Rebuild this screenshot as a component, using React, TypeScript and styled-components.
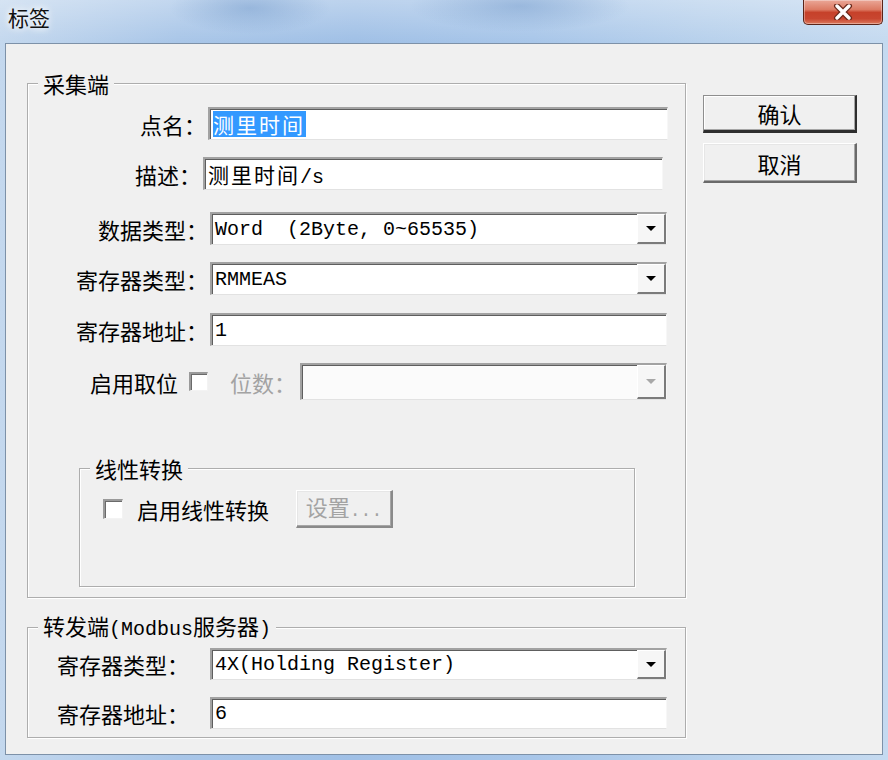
import React from "react";
import styled, { createGlobalStyle } from "styled-components";

const GlobalStyle = createGlobalStyle`
  html, body { margin: 0; padding: 0; background: #b9d1ea; }
  body { font-family: "Noto Sans CJK SC", sans-serif; }
  * { box-sizing: border-box; }
`;

const Window = styled.div`
  width: 888px;
  height: 760px;
  display: flex;
  flex-direction: column;
  overflow: hidden;
  background:
    radial-gradient(ellipse 80px 26px at 250px 8px, rgba(110, 150, 200, 0.45), transparent),
    radial-gradient(ellipse 110px 26px at 520px 6px, rgba(110, 150, 200, 0.45), transparent),
    linear-gradient(180deg, rgba(255, 255, 255, 0.3) 0px, rgba(255, 255, 255, 0) 42px),
    linear-gradient(90deg, #c4d8ee 0%, #a9c6e8 20%, #a0c0e6 40%, #a8c6e9 60%, #b8d1ec 80%, #c5daf0 100%);
`;

const TitleBar = styled.div`
  height: 43px;
  flex: none;
  display: flex;
  justify-content: space-between;
  align-items: flex-start;
  padding: 0 5px 0 8px;
`;

const Title = styled.div`
  font-size: 21px;
  line-height: 24px;
  margin-top: 5px;
  color: #111;
  text-shadow: 0 0 6px #fff, 0 0 10px rgba(255, 255, 255, 0.9);
`;

const CloseButton = styled.div`
  width: 80px;
  height: 25px;
  border: 1px solid #5a2418;
  border-top: none;
  border-radius: 0 0 5px 5px;
  background: linear-gradient(180deg, #eaa797 0%, #dc7a63 40%, #c6412a 52%, #c84630 78%, #dc7a5d 100%);
  box-shadow: inset 0 0 0 1px rgba(255, 255, 255, 0.35);
  display: flex;
  align-items: center;
  justify-content: center;
`;

const Client = styled.div`
  flex: 1;
  margin: 0 5px 5px 5px;
  border: 1px solid #7d91a8;
  background: #f0f0f0;
  display: flex;
  align-items: flex-start;
  padding: 27px 0 0 21px;
  gap: 17px;
`;

const LeftColumn = styled.div`
  width: 659px;
  display: flex;
  flex-direction: column;
`;

const RightColumn = styled.div`
  display: flex;
  flex-direction: column;
  gap: 10px;
  margin-top: 24px;
`;

const Group = styled.fieldset<{ $h: number; $w: number; $top?: number; $left?: number }>`
  margin: ${(p) => p.$top ?? 0}px 0 0 ${(p) => p.$left ?? 0}px;
  padding: 0;
  width: ${(p) => p.$w}px;
  height: ${(p) => p.$h}px;
  min-width: 0;
  border: 1px solid #adadad;
  box-shadow: inset 1px 1px 0 #fff, 1px 1px 0 #fff;
  display: flex;
  flex-direction: column;
`;

const Legend = styled.legend`
  margin-left: 10px;
  padding: 0 5px;
  font-size: 22px;
  line-height: 24px;
  color: #000;
  background: #f0f0f0;
  white-space: nowrap;
`;

const Mono = styled.span`
  font-family: "Liberation Mono", monospace;
  font-size: 20px;
`;

const Row = styled.div<{ $label: number; $field: number; $top: number; $h: number }>`
  display: grid;
  grid-template-columns: ${(p) => p.$label}px ${(p) => p.$field}px;
  column-gap: 2px;
  align-items: center;
  height: ${(p) => p.$h}px;
  margin-top: ${(p) => p.$top}px;
`;

const Label = styled.span<{ $align?: "left" | "right"; $indent?: number; $muted?: boolean }>`
  font-size: 22px;
  line-height: 24px;
  color: ${(p) => (p.$muted ? "#a3a3a3" : "#000")};
  white-space: nowrap;
  text-align: ${(p) => p.$align ?? "right"};
  padding-left: ${(p) => p.$indent ?? 0}px;
`;

const Field = styled.div<{ $disabled?: boolean; $w?: number; $ml?: number }>`
  align-self: stretch;
  ${(p) => (p.$w ? `width: ${p.$w}px; height: 100%;` : "")}
  margin-left: ${(p) => p.$ml ?? 0}px;
  display: flex;
  align-items: stretch;
  background: ${(p) => (p.$disabled ? "#fbfbfb" : "#fff")};
  border-style: solid;
  border-width: 2px 1px 1px 2px;
  border-color: #a2a2a2 #f7f7f7 #e2e2e2 #a2a2a2;
  box-shadow: inset 1px 1px 0 #5e5e5e;
  padding-left: 3px;
  font-family: "Liberation Mono", "Noto Sans CJK SC", monospace;
  font-size: 20px;
  color: #000;
  white-space: pre;
`;

const Value = styled.span`
  flex: 1;
  display: flex;
  align-items: center;
  min-width: 0;
`;

const Cjk = styled.span`
  font-family: "Noto Sans CJK SC", sans-serif;
  font-size: 21px;
  letter-spacing: 2px;
`;

const Selected = styled.span`
  background: #3399ff;
  color: #fff;
  font-family: "Noto Sans CJK SC", sans-serif;
  font-size: 21px;
  letter-spacing: 2px;
  line-height: 26px;
  padding-right: 1px;
`;

const DropButton = styled.div`
  width: 29px;
  display: flex;
  align-items: center;
  justify-content: center;
  background: #f6f6f6;
  border-left: 1px solid #fff;
  border-top: 1px solid #fff;
  border-right: 2px solid #7b7b7b;
  border-bottom: 2px solid #7b7b7b;
`;

const Arrow = styled.span<{ $disabled?: boolean }>`
  width: 0;
  height: 0;
  border-left: 5px solid transparent;
  border-right: 5px solid transparent;
  border-top: 5px solid ${(p) => (p.$disabled ? "#a8a8a8" : "#000")};
`;

const FlagRow = styled.div`
  display: flex;
  align-items: center;
  height: 37px;
  margin-top: 17px;
  padding-left: 62px;
`;

const CheckBox = styled.span<{ $size: number; $ml: number; $mr: number }>`
  flex: none;
  width: ${(p) => p.$size}px;
  height: ${(p) => p.$size}px;
  margin: 0 ${(p) => p.$mr}px 0 ${(p) => p.$ml}px;
  background: #fff;
  border-style: solid;
  border-width: 2px 1px 1px 2px;
  border-color: #9a9a9a #f3f3f3 #f3f3f3 #9a9a9a;
  box-shadow: inset 1px 1px 0 #6a6a6a;
`;

const LinearRow = styled.div`
  display: flex;
  align-items: center;
  height: 38px;
  margin-top: 10px;
`;

const DialogButton = styled.button<{ $default?: boolean; $disabled?: boolean; $w: number; $h: number; $ml?: number }>`
  width: ${(p) => p.$w}px;
  height: ${(p) => p.$h}px;
  margin-left: ${(p) => p.$ml ?? 0}px;
  padding: 0;
  font-family: "Noto Sans CJK SC", sans-serif;
  font-size: 22px;
  line-height: 24px;
  color: ${(p) => (p.$disabled ? "#a3a3a3" : "#000")};
  background: #f0f0f0;
  border-style: solid;
  border-width: ${(p) => (p.$default ? "1px 2px 3px 1px" : "1px 2px 2px 1px")};
  border-color: ${(p) =>
    p.$default ? "#8e8e8e #2e2e2e #2e2e2e #8e8e8e" : p.$disabled ? "#fff #8a8a8a #8a8a8a #fff" : "#fff #6a6a6a #6a6a6a #fff"};
  box-shadow: inset -1px -1px 0 #a6a6a6, inset 1px 1px 0 ${(p) => (p.$default ? "#fff" : "#e6e6e6")};
  text-align: center;
`;

const Dots = styled.span`
  font-family: "Liberation Mono", monospace;
  font-size: 18px;
`;

type FieldRow = {
  label: string;
  labelW: number;
  fieldW: number;
  top: number;
  h: number;
  combo?: boolean;
  content: React.ReactNode;
  align?: "left" | "right";
  indent?: number;
};

const collectRows: FieldRow[] = [
  { label: "点名：", labelW: 178, fieldW: 460, top: 12, h: 33, content: <Selected>测里时间</Selected> },
  {
    label: "描述：",
    labelW: 173,
    fieldW: 460,
    top: 17,
    h: 33,
    content: (
      <span>
        <Cjk>测里时间</Cjk>/s
      </span>
    ),
  },
  { label: "数据类型：", labelW: 180, fieldW: 457, top: 22, h: 33, combo: true, content: "Word  (2Byte, 0~65535)" },
  { label: "寄存器类型：", labelW: 180, fieldW: 457, top: 17, h: 33, combo: true, content: "RMMEAS" },
  { label: "寄存器地址：", labelW: 180, fieldW: 457, top: 18, h: 33, content: "1" },
];

const forwardRows: FieldRow[] = [
  { label: "寄存器类型：", labelW: 180, fieldW: 457, top: 6, h: 32, combo: true, content: "4X(Holding Register)", align: "left", indent: 29 },
  { label: "寄存器地址：", labelW: 180, fieldW: 457, top: 17, h: 32, content: "6", align: "left", indent: 29 },
];

function renderRow(r: FieldRow) {
  return (
    <Row key={r.label + r.top} $label={r.labelW} $field={r.fieldW} $top={r.top} $h={r.h}>
      <Label $align={r.align} $indent={r.indent}>
        {r.label}
      </Label>
      <Field>
        <Value>{r.content}</Value>
        {r.combo && (
          <DropButton>
            <Arrow />
          </DropButton>
        )}
      </Field>
    </Row>
  );
}

export default function App() {
  return (
    <>
      <GlobalStyle />
      <Window>
        <TitleBar>
          <Title>标签</Title>
          <CloseButton>
            <svg width="20" height="16" viewBox="0 0 20 16">
              <path d="M4 2 L16 14 M16 2 L4 14" stroke="#6b2a1c" strokeWidth="6" strokeLinecap="round" />
              <path d="M4 2 L16 14 M16 2 L4 14" stroke="#fff" strokeWidth="3.4" strokeLinecap="round" />
            </svg>
          </CloseButton>
        </TitleBar>
        <Client>
          <LeftColumn>
            <Group $w={659} $h={527}>
              <Legend>采集端</Legend>
              {collectRows.map(renderRow)}
              <FlagRow>
                <Label>启用取位</Label>
                <CheckBox $size={19} $ml={11} $mr={22} />
                <Label $muted>位数：</Label>
                <Field $disabled $w={367} $ml={4}>
                  <Value />
                  <DropButton>
                    <Arrow $disabled />
                  </DropButton>
                </Field>
              </FlagRow>
              <Group $w={556} $h={131} $top={56} $left={51}>
                <Legend>线性转换</Legend>
                <LinearRow>
                  <CheckBox $size={20} $ml={23} $mr={14} />
                  <Label>启用线性转换</Label>
                  <DialogButton $disabled $w={97} $h={38} $ml={27}>
                    设置<Dots>...</Dots>
                  </DialogButton>
                </LinearRow>
              </Group>
            </Group>
            <Group $w={659} $h={125} $top={15}>
              <Legend>
                转发端<Mono>(Modbus</Mono>服务器<Mono>)</Mono>
              </Legend>
              {forwardRows.map(renderRow)}
            </Group>
          </LeftColumn>
          <RightColumn>
            <DialogButton $default $w={154} $h={38}>
              确认
            </DialogButton>
            <DialogButton $w={154} $h={40}>
              取消
            </DialogButton>
          </RightColumn>
        </Client>
      </Window>
    </>
  );
}
